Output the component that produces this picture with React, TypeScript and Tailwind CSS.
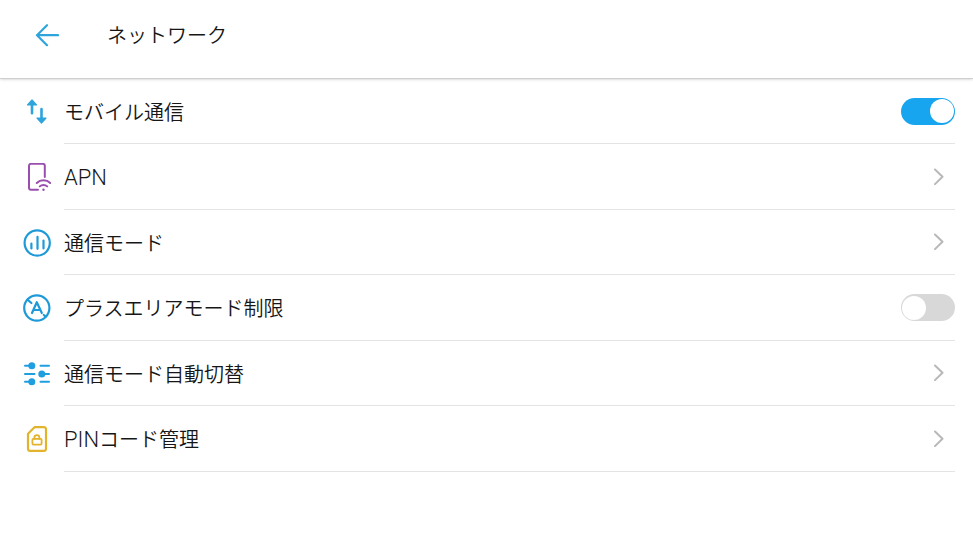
import { useState } from 'react';
import type { ReactNode } from 'react';

type Setting = {
  id: string;
  latin?: string;
  label: string;
  icon: ReactNode;
  toggle?: boolean;
  enabled?: boolean;
};

const iconProps = {
  viewBox: '0 0 28 28',
  fill: 'none',
  stroke: 'currentColor',
  strokeLinecap: 'round' as const,
  strokeLinejoin: 'round' as const,
  'aria-hidden': true,
};

function MobileDataIcon() {
  return (
    <svg {...iconProps} strokeWidth="2.6" className="size-7 shrink-0 text-[#2ea4dc]">
      <path d="M9 5v10.2M18.5 11v10" />
      <path d="M9 2l4.5 5h-9zM18.5 25l-4.5-5h9z" fill="currentColor" strokeWidth="1.2" />
    </svg>
  );
}

function ApnIcon() {
  return (
    <svg {...iconProps} strokeWidth="2" className="size-7 shrink-0 text-[#9a4fae]">
      <path d="M21.8 14V2.5A2 2 0 0 0 19.8.8H8a2 2 0 0 0-2 2v22a2 2 0 0 0 2 2h7" />
      <path d="M13.8 20c3.6-3.6 9.8-3.6 13.4 0M16.8 23.4c2-2 5.4-2 7.4 0" />
      <circle cx="20.5" cy="26.8" r="1.2" fill="currentColor" stroke="none" />
    </svg>
  );
}

function NetworkModeIcon() {
  return (
    <svg {...iconProps} strokeWidth="2.2" className="size-7 shrink-0 text-[#1f9ad8]">
      <circle cx="14.2" cy="14" r="12.6" />
      <path d="M8.4 14.5v5M14.5 7.8v12M20.5 11.5v8" />
    </svg>
  );
}

function PlusAreaIcon() {
  return (
    <svg {...iconProps} strokeWidth="2.2" className="size-7 shrink-0 text-[#1f9ad8]">
      <circle cx="13.8" cy="14" r="12.6" />
      <path d="M9 19l4.8-10.8L18.8 19M10.8 16h6M4.4 5.6L8.4 9M20.8 21l1.8 1.6" />
    </svg>
  );
}

function AutoSwitchIcon() {
  return (
    <svg {...iconProps} strokeWidth="2" className="size-7 shrink-0 text-[#1f9ee0]">
      <path d="M2 5.8h5M17.5 5.8H26M2 13.9h9.5M20 13.9h6M2 21.8h5M17.5 21.8H26" />
      <g fill="currentColor" stroke="none">
        <circle cx="8.8" cy="5.8" r="3.5" />
        <circle cx="18.8" cy="13.9" r="3.5" />
        <circle cx="8.8" cy="21.8" r="3.5" />
      </g>
    </svg>
  );
}

function PinIcon() {
  return (
    <svg {...iconProps} strokeWidth="2.2" className="size-7 shrink-0 text-[#e2b42c]">
      <path d="M11.5 2.2H21a2 2 0 0 1 2 2v19.6a2 2 0 0 1-2 2H7a2 2 0 0 1-2-2V8.7z" />
      <rect x="9.4" y="13.8" width="9.2" height="5.8" rx="1" strokeWidth="1.8" />
      <path d="M11.4 13.8v-1.2a2.5 2.5 0 0 1 5 0v1.2" strokeWidth="1.8" />
    </svg>
  );
}

const settings: Setting[] = [
  { id: 'mobile-data', label: 'モバイル通信', icon: <MobileDataIcon />, toggle: true, enabled: true },
  { id: 'apn', latin: 'APN', label: '', icon: <ApnIcon /> },
  { id: 'network-mode', label: '通信モード', icon: <NetworkModeIcon /> },
  { id: 'plus-area', label: 'プラスエリアモード制限', icon: <PlusAreaIcon />, toggle: true, enabled: false },
  { id: 'auto-switch', label: '通信モード自動切替', icon: <AutoSwitchIcon /> },
  { id: 'pin', latin: 'PIN', label: 'コード管理', icon: <PinIcon /> },
];

function SettingLabel({ latin, label }: { latin?: string; label: string }) {
  return (
    <span className="flex items-baseline pt-[3px]">
      {latin && <span className="text-[22px] leading-7">{latin}</span>}
      {label && <span className="text-xl leading-7">{label}</span>}
    </span>
  );
}

function SettingRow({ setting }: { setting: Setting }) {
  const [on, setOn] = useState(Boolean(setting.enabled));
  const row = 'flex h-full w-full items-center gap-[13px]';
  const body = 'flex h-full flex-1 items-center justify-between border-b border-[#e4e4e4] text-left';

  if (setting.toggle) {
    return (
      <label htmlFor={setting.id} className={row}>
        {setting.icon}
        <span className={body}>
          <SettingLabel latin={setting.latin} label={setting.label} />
          <input
            id={setting.id}
            type="checkbox"
            role="switch"
            checked={on}
            onChange={(e) => setOn(e.target.checked)}
            className="flex h-[27px] w-[54px] appearance-none items-center rounded-full bg-[#d8d8d8] px-px before:size-6 before:rounded-full before:bg-white checked:justify-end checked:bg-[#16a5ee]"
          />
        </span>
      </label>
    );
  }

  return (
    <button type="button" className={row}>
      {setting.icon}
      <span className={body}>
        <SettingLabel latin={setting.latin} label={setting.label} />
        <svg viewBox="0 0 10 18" className="mr-[11px] h-[18px] w-2.5 text-[#b8b8b8]" fill="none" aria-hidden="true">
          <path d="M1 1.5L8.5 8.8 1 16.1" stroke="currentColor" strokeWidth="2" strokeLinecap="round" strokeLinejoin="round" />
        </svg>
      </span>
    </button>
  );
}

export default function App() {
  return (
    <div className="min-h-screen bg-white font-['Roboto','Noto_Sans_CJK_JP',sans-serif] font-[350] text-[#161616]">
      <header className="flex items-center gap-12 border-b border-[#cfcfcf] pt-5 pb-[26px] pl-[35px] shadow-sm">
        <button type="button" aria-label="戻る" className="text-[#2ea4dc]">
          <svg viewBox="0 0 24 24" className="size-6" fill="none" stroke="currentColor" strokeWidth="2.2" strokeLinecap="round" strokeLinejoin="round" aria-hidden="true">
            <path d="M12 1.2L2 11.2l10 10M2 11.2h21" />
          </svg>
        </button>
        <h1 className="text-xl leading-8 font-[350]">ネットワーク</h1>
      </header>
      <main className="pr-[18px] pl-[23px]">
        <ul>
          {settings.map((setting) => (
            <li key={setting.id} className="h-[65px] even:h-[66px]">
              <SettingRow setting={setting} />
            </li>
          ))}
        </ul>
      </main>
    </div>
  );
}
